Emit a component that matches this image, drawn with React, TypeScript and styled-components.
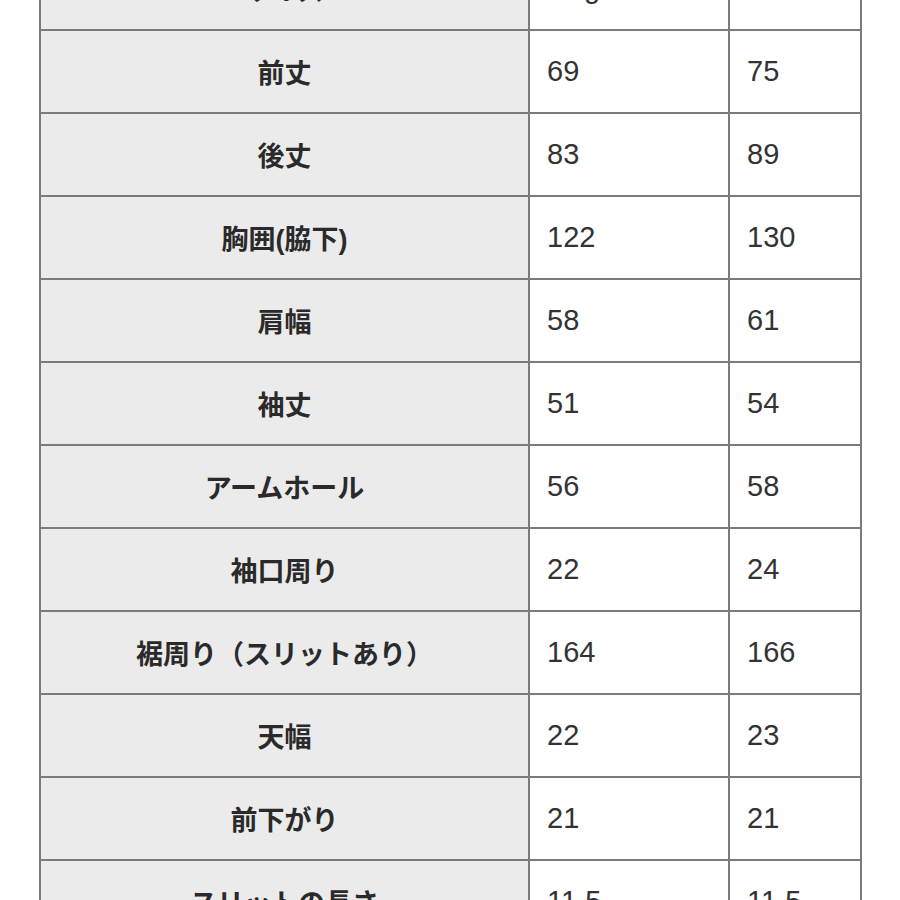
import React from 'react';
import styled, { createGlobalStyle } from 'styled-components';

const GlobalStyle = createGlobalStyle`
  html, body {
    margin: 0;
    padding: 0;
    background: #ffffff;
    overflow: hidden;
  }
`;

const Page = styled.div`
  width: 900px;
  height: 900px;
  overflow: hidden;
  padding-left: 39px;
  box-sizing: border-box;
`;

const Table = styled.table`
  margin-top: -54px;
  width: 821px;
  table-layout: fixed;
  border-collapse: collapse;
  font-family: "Liberation Sans", "Noto Sans CJK JP", sans-serif;
`;

const Col = styled.col<{ $width: number }>`
  width: ${p => p.$width}px;
`;

const HeadCell = styled.th`
  height: 81px;
  padding: 0;
  border: 2px solid #7b7b7b;
  background: #ebebeb;
  color: #2a2a2a;
  font-size: 27px;
  font-weight: 700;
  text-align: center;
  vertical-align: middle;
`;

const ValueCell = styled.td`
  height: 81px;
  padding: 0 0 0 17px;
  border: 2px solid #7b7b7b;
  background: #ffffff;
  color: #333333;
  font-size: 29px;
  font-weight: 400;
  text-align: left;
  vertical-align: middle;
`;

const rows: [string, string, string][] = [
  ['サイズ', 'Regular', 'Over'],
  ['前丈', '69', '75'],
  ['後丈', '83', '89'],
  ['胸囲(脇下)', '122', '130'],
  ['肩幅', '58', '61'],
  ['袖丈', '51', '54'],
  ['アームホール', '56', '58'],
  ['袖口周り', '22', '24'],
  ['裾周り（スリットあり）', '164', '166'],
  ['天幅', '22', '23'],
  ['前下がり', '21', '21'],
  ['スリットの長さ', '11.5', '11.5'],
];

export default function App() {
  return (
    <>
      <GlobalStyle />
      <Page>
        <Table>
          <colgroup>
            <Col $width={489} />
            <Col $width={200} />
            <Col $width={132} />
          </colgroup>
          <tbody>
            {rows.map(([label, a, b]) => (
              <tr key={label}>
                <HeadCell>{label}</HeadCell>
                <ValueCell>{a}</ValueCell>
                <ValueCell>{b}</ValueCell>
              </tr>
            ))}
          </tbody>
        </Table>
      </Page>
    </>
  );
}
